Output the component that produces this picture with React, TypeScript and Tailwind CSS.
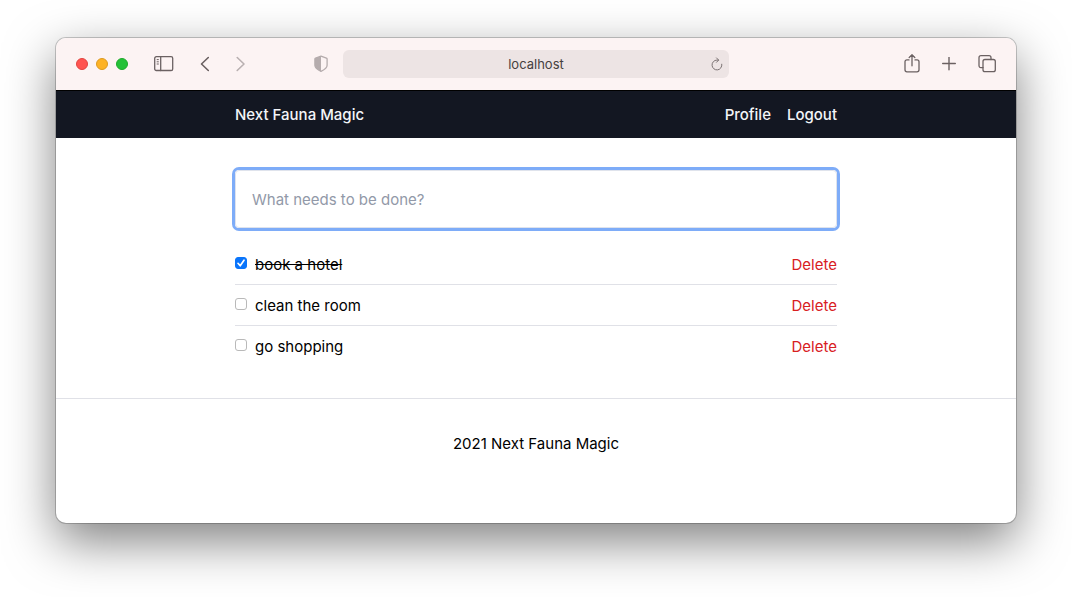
import { useState } from "react";

type Todo = { id: number; title: string; done: boolean };

const initialTodos: Todo[] = [
  { id: 1, title: "book a hotel", done: true },
  { id: 2, title: "clean the room", done: false },
  { id: 3, title: "go shopping", done: false },
];

const iconProps = { fill: "none", stroke: "currentColor", strokeLinecap: "round", strokeLinejoin: "round" } as const;

function SidebarIcon() {
  return (
    <svg {...iconProps} width="20" height="16" viewBox="0 0 20 16" strokeWidth="1.3" aria-hidden="true">
      <rect x="0.7" y="0.7" width="18" height="13.8" rx="1.6" />
      <path d="M6.700.7v13.800" />
      <path d="M3.100 3.600h1.300M3.100 5.800h1.300M3.100 8h1.300" strokeWidth="1" />
    </svg>
  );
}

function ChevronIcon({ direction }: { direction: "left" | "right" }) {
  return (
    <svg {...iconProps} width="10" height="16" viewBox="0 0 10 16" strokeWidth="1.6" aria-hidden="true">
      <path d={direction === "left" ? "M8.3 1.5 1.5 8l6.8 6.5" : "M1.2 1.5 8 8l-6.8 6.5"} />
    </svg>
  );
}

function ShieldIcon() {
  return (
    <svg {...iconProps} width="14" height="18" viewBox="0 0 14 18" strokeWidth="1.3" aria-hidden="true">
      <path d="M7 1.2 12.4 3.1c.5.2.7.4.7.9v6.3c0 2.8-3.2 4.7-6.1 6.100-2.900-1.400-6.100-3.300-6.100-6.100V4c0-.5.2-.7.7-.9Z" />
      <path d="M7 1.200v15.200c-2.900-1.400-6.100-3.300-6.100-6.100V4c0-.5.2-.7.7-.9Z" fill="currentColor" stroke="none" />
    </svg>
  );
}

function ReloadIcon() {
  return (
    <svg {...iconProps} width="12" height="14" viewBox="0 0 12 14" strokeWidth="1" aria-hidden="true">
      <path d="M10.800 7.200A4.900 4.900 0 1 1 5.900 3.100h1.600" />
      <path d="M5.500.9l2.200 2.200-2.200 2.200" />
    </svg>
  );
}

function ShareIcon() {
  return (
    <svg {...iconProps} width="16" height="20" viewBox="0 0 16 20" strokeWidth="1.3" aria-hidden="true">
      <path d="M5 5.900H3C1.700 5.900 1 6.600 1 7.800v8c0 1.300.7 2 2 2h10c1.300 0 2-.7 2-2v-8c0-1.200-.7-1.900-2-1.900h-2" />
      <path d="M8 11.800V.8M5.200 3.500 8 .8l2.800 2.700" />
    </svg>
  );
}

function PlusIcon() {
  return (
    <svg {...iconProps} width="14" height="14" viewBox="0 0 14 14" strokeWidth="1.4" aria-hidden="true">
      <path d="M7 .2v12.600M.7 6.500h12.600" />
    </svg>
  );
}

function TabsIcon() {
  return (
    <svg {...iconProps} width="18" height="18" viewBox="0 0 18 18" strokeWidth="1.3" aria-hidden="true">
      <rect x="5" y="4.500" width="12.300" height="12.200" rx="2" />
      <path d="M5 12.600H3C1.700 12.600 1 11.900 1 10.600V2.700C1 1.400 1.700.7 3 .7H11c1.300 0 2 .7 2 2v1.800" />
    </svg>
  );
}

function BrowserToolbar() {
  return (
    <div className="flex h-[52px] items-center bg-[#fcf3f3] text-[#6b6162]">
      <div className="flex flex-1 items-center pl-5">
        <div className="flex gap-2">
          <button type="button" aria-label="Close" className="size-3 rounded-full border border-[#e2443f] bg-[#ff5450]" />
          <button type="button" aria-label="Minimize" className="size-3 rounded-full border border-[#dd9a1f] bg-[#fdb225]" />
          <button type="button" aria-label="Zoom" className="size-3 rounded-full border border-[#1faa2b] bg-[#24c138]" />
        </div>
        <button type="button" aria-label="Show sidebar" className="ml-[26px]"><SidebarIcon /></button>
        <button type="button" aria-label="Back" className="ml-[26px]"><ChevronIcon direction="left" /></button>
        <button type="button" aria-label="Forward" className="ml-[26px] text-[#b9b0b1]"><ChevronIcon direction="right" /></button>
        <button type="button" aria-label="Privacy report" className="ml-auto mr-[15px] text-[#b5acad]"><ShieldIcon /></button>
      </div>
      <div className="flex h-7 w-[41%] max-w-[386px] items-center rounded-md bg-[#ede4e4] px-1.5">
        <input
          aria-label="Address"
          defaultValue="localhost"
          className="min-w-0 flex-1 bg-transparent pl-3 text-center text-[13px] text-[#453f40] outline-none"
        />
        <button type="button" aria-label="Reload" className="text-[#7b7273]"><ReloadIcon /></button>
      </div>
      <div className="flex flex-1 items-center justify-end gap-[22px] pr-5">
        <button type="button" aria-label="Share"><ShareIcon /></button>
        <button type="button" aria-label="New tab"><PlusIcon /></button>
        <button type="button" aria-label="Tab overview"><TabsIcon /></button>
      </div>
    </div>
  );
}

export default function App() {
  const [todos, setTodos] = useState<Todo[]>(initialTodos);
  const [draft, setDraft] = useState("");

  const toggle = (id: number) =>
    setTodos((list) => list.map((todo) => (todo.id === id ? { ...todo, done: !todo.done } : todo)));
  const remove = (id: number) => setTodos((list) => list.filter((todo) => todo.id !== id));
  const add = () => {
    if (!draft.trim()) return;
    setTodos((list) => [...list, { id: Date.now(), title: draft.trim(), done: false }]);
    setDraft("");
  };

  return (
    <div className="min-h-screen bg-white px-14 pt-[38px] pb-[74px] font-['Inter',sans-serif] text-[15px] leading-6 text-black">
      <div className="overflow-hidden rounded-[10px] bg-white shadow-[0_0_0_1px_rgba(0,0,0,0.2),0_18px_50px_rgba(0,0,0,0.5)]">
        <BrowserToolbar />
        <header className="border-t border-black bg-[#131722] text-[#f3f5f8]">
          <nav className="mx-auto flex max-w-[602px] items-center justify-between pt-3 pb-[11px] font-medium">
            <a href="#home">Next Fauna Magic</a>
            <div className="flex gap-4">
              <a href="#profile">Profile</a>
              <a href="#logout">Logout</a>
            </div>
          </nav>
        </header>
        <main className="mx-auto max-w-[602px] py-8">
          <form
            onSubmit={(event) => {
              event.preventDefault();
              add();
            }}
          >
            <input
              aria-label="New todo"
              placeholder="What needs to be done?"
              value={draft}
              onChange={(event) => setDraft(event.target.value)}
              className="block w-full rounded border border-[#dfe3ec] px-4 pt-[17px] pb-[15px] ring-3 ring-[#7eacf8] outline-none placeholder:text-[#9299a8]"
            />
          </form>
          <ul className="mt-4 divide-y divide-[#e0e1e7]">
            {todos.map((todo) => (
              <li key={todo.id} className="flex items-center justify-between pt-[9px] pb-[7px]">
                <label className="flex items-center gap-2">
                  <span className="grid pb-1">
                    <input
                      type="checkbox"
                      checked={todo.done}
                      onChange={() => toggle(todo.id)}
                      className="col-start-1 row-start-1 size-3 appearance-none rounded-[3px] border border-[#b9b9b9] bg-white checked:border-[#0a75fb] checked:bg-[#0a75fb]"
                    />
                    {todo.done && (
                      <svg className="pointer-events-none col-start-1 row-start-1 size-3" viewBox="0 0 12 12" fill="none" stroke="white" strokeWidth="1.7" strokeLinecap="round" strokeLinejoin="round" aria-hidden="true">
                        <path d="M3 6.300 5.200 8.800 9 3.200" />
                      </svg>
                    )}
                  </span>
                  <span className={todo.done ? "line-through" : ""}>{todo.title}</span>
                </label>
                <button type="button" onClick={() => remove(todo.id)} className="text-[#d8201f]">
                  Delete
                </button>
              </li>
            ))}
          </ul>
        </main>
        <footer className="border-t border-[#e0e1e7] pt-[33px] pb-[67px] text-center">2021 Next Fauna Magic</footer>
      </div>
    </div>
  );
}
